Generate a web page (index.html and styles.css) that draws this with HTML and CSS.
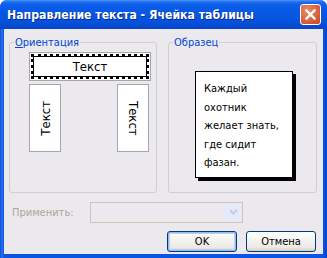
FILE: index.html
```html
<!DOCTYPE html>
<html>
<head>
<meta charset="utf-8">
<link rel="stylesheet" href="styles.css">
</head>
<body>
<div class="window">
  <div class="titlebar">
    <span class="title">Направление текста - Ячейка таблицы</span>
    <span class="close">
      <svg width="13" height="13" viewBox="0 0 13 13"><path d="M2.5 2.5 L10.5 10.5 M10.5 2.5 L2.5 10.5" stroke="#fff" stroke-width="2.4" stroke-linecap="square"/></svg>
    </span>
  </div>
  <div class="content">
    <div class="groups">
      <fieldset class="group">
        <legend><u>О</u>риентация</legend>
        <div class="orient">
          <div class="hbox"><div class="hbox-inner">Текст</div></div>
          <div class="vrow">
            <div class="vbox"><span class="up">Текст</span></div>
            <div class="vbox"><span class="down">Текст</span></div>
          </div>
        </div>
      </fieldset>
      <fieldset class="group">
        <legend>Образец</legend>
        <div class="sample">
          <div class="line">Каждый</div>
          <div class="line">охотник</div>
          <div class="line">желает знать,</div>
          <div class="line">где сидит</div>
          <div class="line">фазан.</div>
        </div>
      </fieldset>
    </div>
    <div class="apply">
      <span class="apply-label">Применить:</span>
      <div class="combo">
        <span class="combo-btn">
          <svg width="9" height="6" viewBox="0 0 9 6"><path d="M1 1 L4.5 4.5 L8 1" fill="none" stroke="#c3cde3" stroke-width="2"/></svg>
        </span>
      </div>
    </div>
    <div class="buttons">
      <button class="btn default">OK</button>
      <button class="btn">Отмена</button>
    </div>
  </div>
</div>
</body>
</html>
```
FILE: styles.css
```css
* { box-sizing: border-box; }
html, body { margin: 0; padding: 0; background: #fff; }
body {
  font-family: "DejaVu Sans Condensed", "DejaVu Sans", sans-serif;
  font-size: 11px;
  color: #000;
}
.window {
  width: 327px;
  height: 258px;
  background: linear-gradient(to right, #0a4fd8 0, #2a6ff0 2px, #0a55e3 4px, #0a55e3 323px, #0544c8 327px);
  border-radius: 7px 7px 0 0;
  display: flex;
  flex-direction: column;
  padding: 0 4px 4px 4px;
}
.titlebar {
  height: 29px;
  margin: 0 -4px;
  border-radius: 7px 7px 0 0;
  background: linear-gradient(to bottom, #4d97f8 0, #1f6cf0 2px, #0b5de8 5px, #0657e3 14px, #0552dc 22px, #0548cf 27px, #0a46c4 29px);
  display: flex;
  align-items: center;
  padding: 0 6px 0 7px;
}
.title {
  flex: 1;
  color: #fff;
  font-family: "DejaVu Sans Condensed", "DejaVu Sans", sans-serif;
  font-weight: bold;
  font-size: 12.2px;
  text-shadow: 1px 1px 0 #0a2a8a;
}
.close {
  width: 21px;
  height: 21px;
  border: 1px solid #fff;
  border-radius: 3px;
  background: radial-gradient(circle at 35% 30%, #ec8b68 0, #d9643d 55%, #c5461f 100%);
  display: flex;
  align-items: center;
  justify-content: center;
}
.content {
  flex: 1;
  background: #ebe9ed;
  display: flex;
  flex-direction: column;
  padding: 7px 6px 0 5px;
}
.groups {
  display: grid;
  grid-template-columns: 148px 149px;
  column-gap: 11px;
}
.group {
  margin: 0;
  border: 1px solid #d0d0c8;
  border-radius: 3px;
  padding: 0;
  height: 157px;
}
.group legend {
  color: #0046d5;
  padding: 0 1px;
  margin-left: 4px;
  line-height: 13px;
}
.group legend u { text-decoration: underline; }
.orient {
  padding: 3px 0 0 19px;
  width: 141px;
}
.hbox {
  width: 122px;
  height: 29px;
  border: 1px solid #a7a6aa;
  background: #fff;
  padding: 1px;
}
.hbox-inner {
  width: 100%;
  height: 100%;
  border: 3px dotted #000;
  outline: 1px solid #000;
  outline-offset: -3px;
  display: flex;
  align-items: center;
  justify-content: center;
  font-size: 13px;
}
.vrow {
  display: flex;
  justify-content: space-between;
  width: 120px;
  margin-top: 3px;
}
.vbox {
  width: 32px;
  height: 68px;
  border: 1px solid #a7a6aa;
  background: #fff;
  display: flex;
  align-items: center;
  justify-content: center;
  font-size: 13px;
}
.vbox span { writing-mode: vertical-rl; }
.vbox .up { transform: rotate(180deg); }
.sample {
  margin: 22px 0 0 26px;
  width: 98px;
  height: 107px;
  background: #fff;
  border: 1px solid #000;
  box-shadow: 3px 3px 0 #000;
  padding: 8px 0 0 8px;
}
.line {
  height: 18.6px;
  line-height: 18.6px;
  white-space: nowrap;
}
.apply {
  display: flex;
  align-items: center;
  margin-top: 9px;
  height: 20px;
}
.apply-label {
  color: #aca899;
  width: 81px;
  padding-left: 3px;
}
.combo {
  width: 153px;
  height: 21px;
  border: 1px solid #c9c7ba;
  background: #ebe9ed;
  display: flex;
  justify-content: flex-end;
  padding: 1px;
}
.combo-btn {
  width: 16px;
  height: 17px;
  background: #e3ebfb;
  border-radius: 2px;
  display: flex;
  align-items: center;
  justify-content: center;
}
.buttons {
  display: flex;
  justify-content: flex-end;
  gap: 9px;
  margin-top: 9px;
  padding-right: 1px;
}
.btn {
  width: 70px;
  height: 21px;
  border: 1px solid #003c74;
  border-radius: 3px;
  background: linear-gradient(to bottom, #ffffff 0, #f4f4f0 40%, #ecebe6 80%, #d6d0c5 100%);
  font-family: "DejaVu Sans Condensed", "DejaVu Sans", sans-serif;
  font-size: 11px;
  color: #000;
  padding: 0;
}
.btn.default {
  box-shadow: inset 0 0 0 1px #98b8f4, inset 0 0 0 2px #bccff8;
}
```
